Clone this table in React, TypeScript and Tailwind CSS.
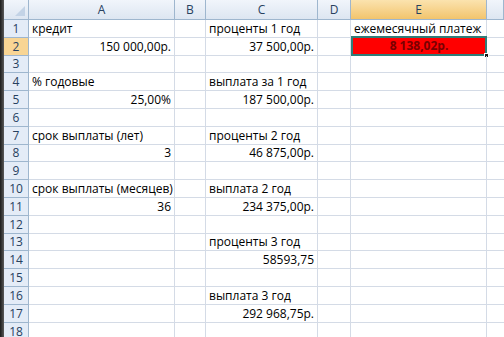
import React from 'react';

type Cell = { text: string; align?: 'left' | 'right' };
type Row = { n: number; a?: Cell; c?: Cell; e?: Cell };

const rows: Row[] = [
  { n: 1, a: { text: 'кредит' }, c: { text: 'проценты 1 год' }, e: { text: 'ежемесячный платеж' } },
  { n: 2, a: { text: '150 000,00р.', align: 'right' }, c: { text: '37 500,00р.', align: 'right' } },
  { n: 3 },
  { n: 4, a: { text: '% годовые' }, c: { text: 'выплата за 1 год' } },
  { n: 5, a: { text: '25,00%', align: 'right' }, c: { text: '187 500,00р.', align: 'right' } },
  { n: 6 },
  { n: 7, a: { text: 'срок выплаты (лет)' }, c: { text: 'проценты 2 год' } },
  { n: 8, a: { text: '3', align: 'right' }, c: { text: '46 875,00р.', align: 'right' } },
  { n: 9 },
  { n: 10, a: { text: 'срок выплаты (месяцев)' }, c: { text: 'выплата 2 год' } },
  { n: 11, a: { text: '36', align: 'right' }, c: { text: '234 375,00р.', align: 'right' } },
  { n: 12 },
  { n: 13, c: { text: 'проценты 3 год' } },
  { n: 14, c: { text: '58593,75', align: 'right' } },
  { n: 15 },
  { n: 16, c: { text: 'выплата 3 год' } },
  { n: 17, c: { text: '292 968,75р.', align: 'right' } },
  { n: 18 },
];

const CellText = ({ cell }: { cell?: Cell }) => {
  if (!cell) return null;
  return (
    <span className={`block w-full whitespace-nowrap px-[3px] ${cell.align === 'right' ? 'text-right' : 'text-left'}`}>
      {cell.text}
    </span>
  );
};

const ColHeader = ({ label, w, active }: { label: string; w: string; active?: boolean }) => (
  <div
    className={`${w} h-full flex items-center justify-center border-r border-b border-[#9eb6ce] text-[#27415f] ${
      active ? 'bg-gradient-to-b from-[#fbe3ae] to-[#f2c46c]' : 'bg-gradient-to-b from-[#f1f5fb] to-[#dde6f1]'
    }`}
  >
    {label}
  </div>
);

const App = () => {
  return (
    <div
      className="w-[504px] h-[337px] overflow-hidden flex bg-white text-[12px] text-black"
      style={{ fontFamily: '"Open Sans", "Liberation Sans", sans-serif' }}
    >
      <div className="w-[4px] h-full bg-gradient-to-r from-[#1c1c1c] to-[#5a5a5a]" />
      <div className="flex-1 flex flex-col">
        <div className="h-[20px] flex shrink-0">
          <div className="w-[25px] h-full border-r border-b border-[#9eb6ce] bg-gradient-to-b from-[#f1f5fb] to-[#dde6f1] relative">
            <div className="absolute right-[3px] bottom-[3px] w-0 h-0 border-l-[10px] border-l-transparent border-b-[10px] border-b-[#c3d3e6]" />
          </div>
          <ColHeader label="A" w="w-[146px]" />
          <ColHeader label="B" w="w-[31px]" />
          <ColHeader label="C" w="w-[112px]" />
          <ColHeader label="D" w="w-[33px]" />
          <ColHeader label="E" w="w-[136px]" active />
          <ColHeader label="" w="flex-1" />
        </div>
        {rows.map((r) => {
          const short = r.n === 3 || r.n === 8 || r.n === 13;
          return (
            <div key={r.n} className={`flex shrink-0 ${short ? 'h-[17px]' : 'h-[18px]'}`}>
              <div
                className={`w-[25px] h-full flex items-center justify-center border-r border-b border-[#9eb6ce] text-[#27415f] ${
                  r.n === 2 ? 'bg-[#f8d594]' : 'bg-[#e4ecf7]'
                }`}
              >
                {r.n}
              </div>
              <div className="w-[146px] h-full flex items-center border-r border-b border-[#d4dbe6]">
                <CellText cell={r.a} />
              </div>
              <div className="w-[31px] h-full border-r border-b border-[#d4dbe6]" />
              <div className="w-[112px] h-full flex items-center border-r border-b border-[#d4dbe6]">
                <CellText cell={r.c} />
              </div>
              <div className="w-[33px] h-full border-r border-b border-[#d4dbe6]" />
              <div className="w-[136px] h-full flex items-center border-r border-b border-[#d4dbe6] relative">
                {r.n === 2 ? (
                  <div className="absolute left-[0px] top-[-2px] right-[-1px] bottom-[-1px] border-2 border-[#2f7d78] bg-[#ff0000] flex items-center justify-center font-bold text-[#7a0000]">
                    8 138,02р.
                    <div className="absolute right-[-4px] bottom-[-4px] w-[5px] h-[5px] bg-[#1a1a1a] border border-white" />
                  </div>
                ) : (
                  <CellText cell={r.e} />
                )}
              </div>
              <div className="flex-1 h-full border-b border-[#d4dbe6]" />
            </div>
          );
        })}
      </div>
    </div>
  );
};

export default App;
